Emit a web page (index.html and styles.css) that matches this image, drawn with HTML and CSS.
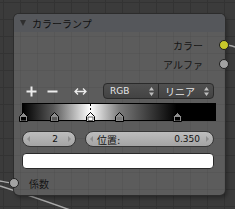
FILE: index.html
```html
<!DOCTYPE html>
<html lang="ja">
<head>
    <meta charset="UTF-8">
    <title>カラーランプ</title>
    <link rel="stylesheet" href="styles.css">
</head>
<body>
<div class="canvas">
    <svg class="links" width="235" height="209" viewBox="0 0 235 209">
        <path d="M226 45 C229 45 232 46 235 47" />
        <path d="M0 181 C5 182 9 183 14 183" />
        <path d="M0 186 C22 193 45 201 76 212" />
    </svg>

    <div class="node">
        <div class="node-header">
            <span class="caret"></span>
            <span class="title">カラーランプ</span>
        </div>

        <div class="socket-row out">
            <span>カラー</span>
            <i class="socket yellow"></i>
        </div>
        <div class="socket-row out second">
            <span>アルファ</span>
            <i class="socket grey"></i>
        </div>

        <div class="ramp-tools">
            <span class="tool">
                <svg width="11" height="11" viewBox="0 0 11 11"><path d="M5.5 0.5 V10.5 M0.5 5.5 H10.5" /></svg>
            </span>
            <span class="tool minus">
                <svg width="11" height="11" viewBox="0 0 11 11"><path d="M0.5 5.5 H10.5" /></svg>
            </span>
            <span class="tool flip">
                <svg width="13" height="9" viewBox="0 0 13 9"><path class="thin" d="M1 4.5 H12 M4 1.5 L1 4.5 L4 7.5 M9 1.5 L12 4.5 L9 7.5" /></svg>
            </span>
            <div class="menu">
                <div class="menu-part">
                    <span>RGB</span>
                    <svg class="updown" width="5" height="9" viewBox="0 0 5 9"><path d="M2.5 0 L5 3.5 H0 Z M2.5 9 L5 5.5 H0 Z" /></svg>
                </div>
                <div class="menu-part">
                    <span class="jp">リニア</span>
                    <svg class="updown" width="5" height="9" viewBox="0 0 5 9"><path d="M2.5 0 L5 3.5 H0 Z M2.5 9 L5 5.5 H0 Z" /></svg>
                </div>
            </div>
        </div>

        <div class="ramp">
            <span class="active-line" style="left: 35%"></span>
            <svg class="stop" style="left: 0%" width="9" height="10" viewBox="0 0 9 10"><path class="roof" d="M0.5 9.5 V4.5 L4.5 0.5 L8.5 4.5 V9.5 Z" /><rect x="2" y="5" width="5" height="3.5" fill="#000" /></svg>
            <svg class="stop" style="left: 16%" width="9" height="10" viewBox="0 0 9 10"><path class="roof" d="M0.5 9.5 V4.5 L4.5 0.5 L8.5 4.5 V9.5 Z" /><rect x="2" y="5" width="5" height="3.5" fill="#5a5a5a" /></svg>
            <svg class="stop" style="left: 50%" width="9" height="10" viewBox="0 0 9 10"><path class="roof" d="M0.5 9.5 V4.5 L4.5 0.5 L8.5 4.5 V9.5 Z" /><rect x="2" y="5" width="5" height="3.5" fill="#7c7c7c" /></svg>
            <svg class="stop" style="left: 80%" width="9" height="10" viewBox="0 0 9 10"><path class="roof" d="M0.5 9.5 V4.5 L4.5 0.5 L8.5 4.5 V9.5 Z" /><rect x="2" y="5" width="5" height="3.5" fill="#000" /></svg>
            <svg class="stop active" style="left: 35%" width="9" height="10" viewBox="0 0 9 10"><path class="roof" d="M0.5 9.5 V4.5 L4.5 0.5 L8.5 4.5 V9.5 Z" /><rect x="2" y="5" width="5" height="3.5" fill="#fff" stroke="#000" stroke-width="0.6" /></svg>
        </div>

        <div class="fields">
            <div class="num idx">
                <span class="arr left"></span>
                <span class="value">2</span>
                <span class="arr right"></span>
            </div>
            <div class="num pos">
                <span class="arr left"></span>
                <span class="label">位置:</span>
                <span class="value">0.350</span>
                <span class="arr right"></span>
            </div>
        </div>

        <div class="swatch"></div>

        <div class="socket-row in">
            <i class="socket grey"></i>
            <span>係数</span>
        </div>
    </div>
</div>
</body>
</html>
```

FILE: styles.css
```css
body {
    margin: 0;
    background-color: #3a3a3a;
    font-family: "DejaVu Sans", "Noto Sans CJK JP", sans-serif;
}

.canvas {
    position: relative;
    width: 235px;
    height: 209px;
    overflow: hidden;
    background-color: #3b3b3b;
    background-image:
        linear-gradient(to right, #333333 1px, transparent 1px),
        linear-gradient(to bottom, #333333 1px, transparent 1px);
    background-size: 17px 17px;
    background-position: 3px 2px;
}

.links {
    position: absolute;
    left: 0;
    top: 0;
}

.links path {
    fill: none;
    stroke: #a9a9a9;
    stroke-width: 1.4;
}

.node {
    position: absolute;
    left: 14px;
    top: 14px;
    width: 211px;
    height: 181px;
    box-sizing: border-box;
    padding: 0 11px 3px 8px;
    display: flex;
    flex-direction: column;
    border-radius: 5px;
    background-color: #5c5c5c;
    background-image:
        linear-gradient(to right, rgba(0, 0, 0, 0.05) 1px, transparent 1px),
        linear-gradient(to bottom, rgba(0, 0, 0, 0.05) 1px, transparent 1px);
    background-size: 17px 17px;
    background-position: 6px 5px;
    box-shadow: 0 0 0 1px #2c2c2c, 2px 3px 4px rgba(0, 0, 0, 0.35);
}

.node-header {
    display: flex;
    align-items: center;
    height: 18px;
    margin: 0 -11px 0 -8px;
    padding-left: 6px;
    border-radius: 5px 5px 0 0;
    background-color: #55575b;
}

.caret {
    width: 0;
    height: 0;
    border-left: 3.5px solid transparent;
    border-right: 3.5px solid transparent;
    border-top: 6px solid #2f2f2f;
    margin-right: 6px;
}

.title {
    font-size: 10px;
    color: #111;
}

.socket-row {
    position: relative;
    display: flex;
    align-items: center;
    height: 18px;
    font-size: 10px;
    color: #151515;
}

.socket-row.out {
    justify-content: flex-end;
    padding-right: 11px;
    margin-top: 4px;
}

.socket-row.out.second {
    margin-top: 1px;
}

.socket-row.in {
    padding-left: 7px;
    margin-top: 5px;
}

.socket {
    position: absolute;
    top: 50%;
    width: 8px;
    height: 8px;
    margin-top: -5px;
    border: 1px solid #202020;
    border-radius: 50%;
}

.out .socket {
    right: -15px;
}

.in .socket {
    left: -13px;
}

.socket.yellow {
    background-color: #c9c92a;
}

.socket.grey {
    background-color: #a2a2a2;
}

.ramp-tools {
    display: flex;
    align-items: center;
    height: 16px;
    margin-top: 10px;
}

.tool {
    display: flex;
    justify-content: center;
    width: 18px;
}

.tool.minus {
    margin-left: 3px;
}

.tool.flip {
    margin-left: 10px;
}

.tool path {
    fill: none;
    stroke: #ececec;
    stroke-width: 2;
}

.tool path.thin {
    stroke-width: 1.3;
}

.menu {
    display: flex;
    width: 111px;
    height: 16px;
    margin-left: auto;
    box-sizing: border-box;
    border: 1px solid #2a2a2a;
    border-radius: 4px;
    background: linear-gradient(#505050, #434343);
    color: #e6e6e6;
    font-size: 9px;
}

.menu-part {
    flex: 1;
    display: flex;
    align-items: center;
    justify-content: space-between;
    padding: 0 4px 0 6px;
}

.menu-part + .menu-part {
    border-left: 1px solid #2a2a2a;
}

.menu-part .jp {
    font-size: 10px;
}

.updown path {
    fill: #bdbdbd;
}

.ramp {
    position: relative;
    height: 18px;
    margin-top: 4px;
    margin-right: -2px;
    box-sizing: border-box;
    border: 1px solid #000;
    background: linear-gradient(to right, #000 0%, #5a5a5a 16%, #fff 35%, #7c7c7c 50%, #000 80%, #000 100%);
}

.active-line {
    position: absolute;
    top: 0;
    bottom: 0;
    width: 1px;
    background: repeating-linear-gradient(#000 0 2px, transparent 2px 4px);
}

.stop {
    position: absolute;
    bottom: -2px;
    margin-left: -4px;
}

.stop .roof {
    fill: #8c8c8c;
    stroke: #000;
    stroke-width: 1;
}

.stop.active .roof {
    fill: #fff;
}

.fields {
    display: flex;
    gap: 9px;
    height: 16px;
    margin-top: 10px;
}

.num {
    display: flex;
    align-items: center;
    box-sizing: border-box;
    padding: 0 4px;
    border: 1px solid #363636;
    border-radius: 8px;
    background: linear-gradient(#bdbdbd, #a4a4a4);
    color: #111;
    font-size: 9px;
}

.num.idx {
    width: 54px;
}

.num.idx .value {
    margin-left: auto;
    margin-right: 10px;
}

.num.pos {
    flex: 1;
}

.num .label {
    margin-left: 4px;
    font-size: 10px;
}

.num.pos .value {
    margin-left: auto;
    margin-right: 6px;
}

.arr {
    width: 0;
    height: 0;
    border-top: 3px solid transparent;
    border-bottom: 3px solid transparent;
}

.arr.left {
    border-right: 3px solid #8e8e8e;
}

.arr.right {
    border-left: 3px solid #8e8e8e;
}

.swatch {
    height: 16px;
    margin-top: 6px;
    box-sizing: border-box;
    border: 1px solid #2a2a2a;
    border-radius: 4px;
    background-color: #fff;
}
```
